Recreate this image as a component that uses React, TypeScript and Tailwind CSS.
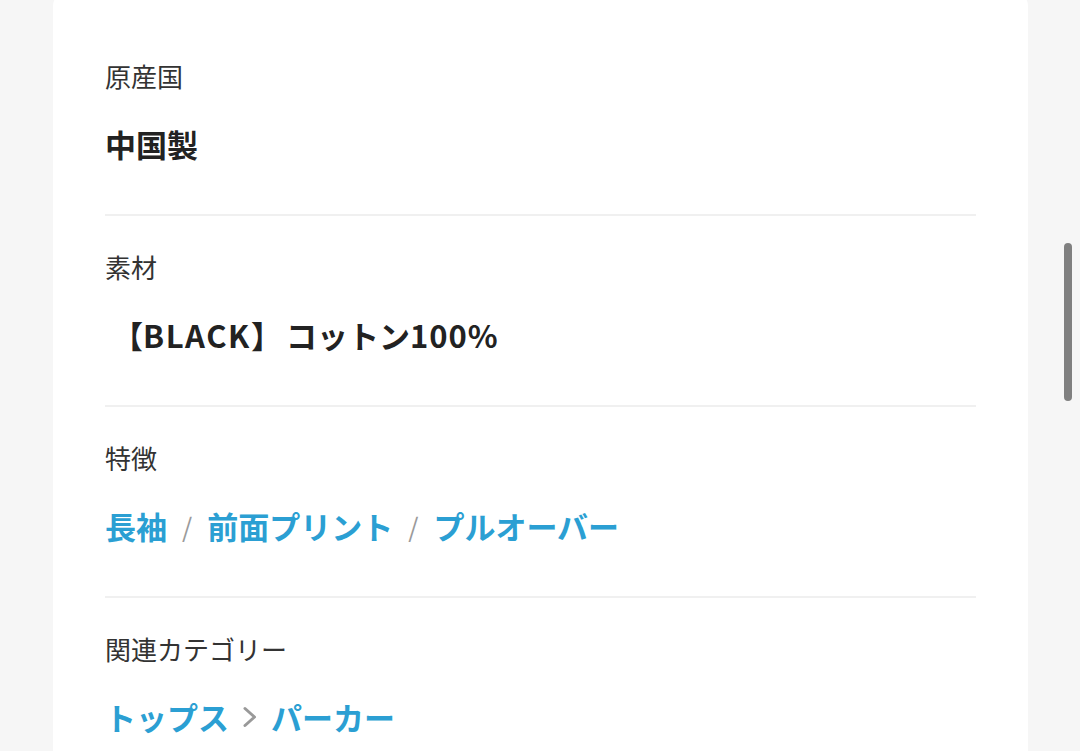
import React from "react";

const jp = { fontFamily: '"Noto Sans CJK JP", "Noto Sans", sans-serif' };

function Section({ label, children, last }: { label: string; children: React.ReactNode; last?: boolean }) {
  return (
    <div className={last ? "pt-[33px] pb-[40px]" : "pt-[33px] pb-[50px] border-b-2 border-[#f0f0f0]"}>
      <div className="text-[26px] leading-[36px] text-[#333333]">{label}</div>
      <div className="mt-[30px] text-[31px] leading-[40px] font-bold">{children}</div>
    </div>
  );
}

function Links({ items, sep }: { items: string[]; sep: "slash" | "chevron" }) {
  return (
    <div className="flex items-center text-[#2b9fd3]">
      {items.map((item, i) => (
        <React.Fragment key={item}>
          {i > 0 &&
            (sep === "slash" ? (
              <span className="mx-[15px] font-normal text-[#9a9a9a] text-[26px]">/</span>
            ) : (
              <svg className="mx-[13px]" width="16" height="24" viewBox="0 0 16 24" fill="none">
                <path d="M3 3.5 L12.5 12 L3 20.5" stroke="#999999" strokeWidth="3" strokeLinecap="round" strokeLinejoin="round" />
              </svg>
            ))}
          <span>{item}</span>
        </React.Fragment>
      ))}
    </div>
  );
}

export default function App() {
  return (
    <div className="min-h-[751px] h-[751px] overflow-hidden bg-[#f6f6f6] flex" style={jp}>
      <div className="flex-1 pl-[53px] pr-[52px]">
        <div className="-mt-[8px] bg-white rounded-t-[14px] h-[780px] pt-[33px] px-[52px]">
          <Section label="原産国">
            <span className="text-[#222222]">中国製</span>
          </Section>
          <Section label="素材">
            <span className="text-[#222222]">
              <span className="pl-[7px]">【</span>
              <span className="tracking-[1.6px]">BLACK</span>
              <span className="pr-[4px]">】</span>コットン<span className="tracking-[1px]">100%</span>
            </span>
          </Section>
          <Section label="特徴">
            <Links items={["長袖", "前面プリント", "プルオーバー"]} sep="slash" />
          </Section>
          <Section label="関連カテゴリー" last>
            <Links items={["トップス", "パーカー"]} sep="chevron" />
          </Section>
        </div>
      </div>
      <div className="w-0 relative">
        <div className="absolute right-[8px] top-[243px] w-[8px] h-[158px] rounded-full bg-[#808080]" />
      </div>
    </div>
  );
}
